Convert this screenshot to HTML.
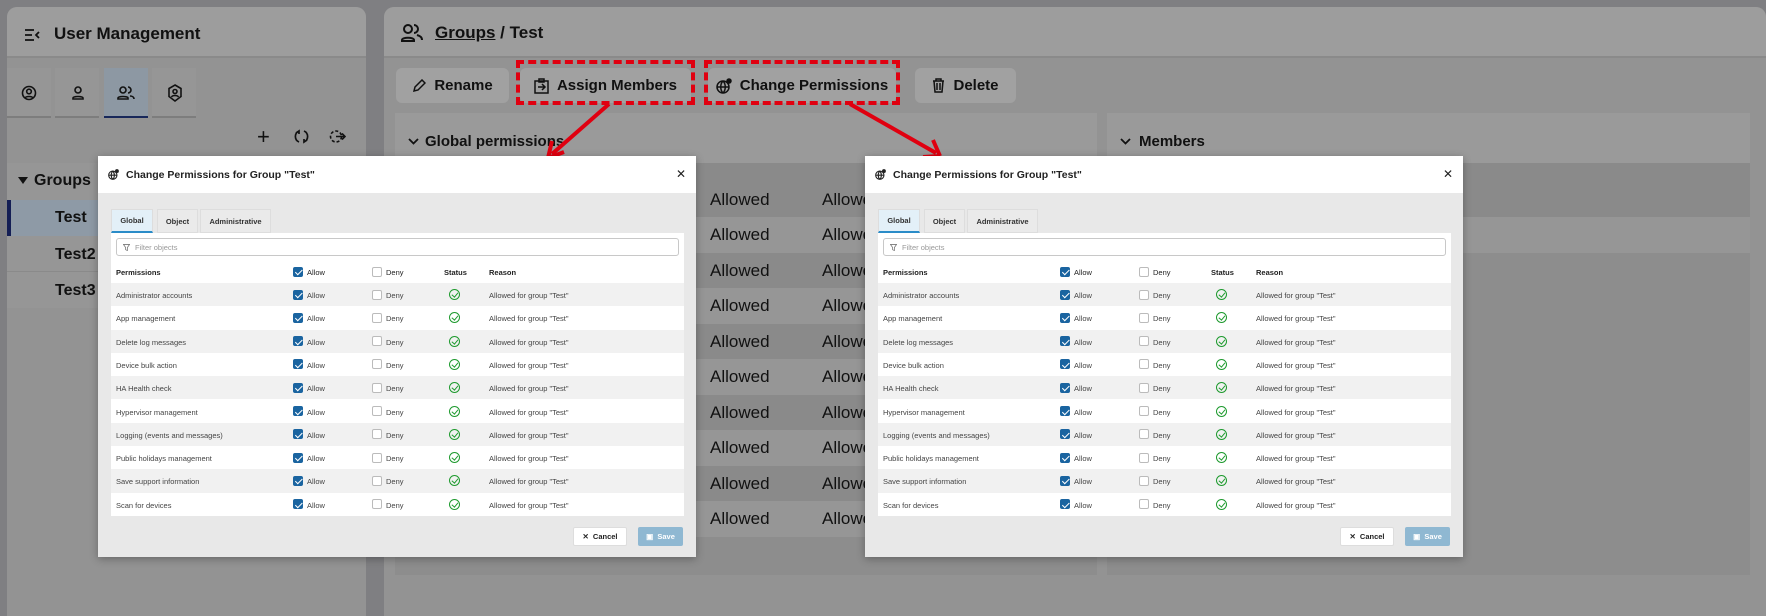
<!DOCTYPE html>
<html><head><meta charset="utf-8"><style>
*{box-sizing:border-box;margin:0;padding:0}
body{width:1766px;height:616px;overflow:hidden;background:#7f7f82;font-family:"Liberation Sans",Arial,sans-serif;position:relative;color:#111}
.abs{position:absolute}
.panel{position:absolute;background:#939393;border-radius:10px 10px 0 0;overflow:hidden}
.hdr{position:absolute;left:0;right:0;top:0;height:51px;background:#9d9d9d;border-bottom:2px solid #8a8a8a}
.tab{position:absolute;top:61px;height:50px;background:#969696;border-bottom:2px solid #7d7d7d}
.btn{position:absolute;top:61px;height:41px;background:#a1a1a1;border-radius:6px;font-weight:bold;font-size:15px;display:flex;align-items:center;justify-content:center;gap:8px}
.dash{position:absolute;border:4px dashed #e00010}
.sec{position:absolute;top:113px;background:#939393;border-radius:6px 6px 0 0}
.band{position:absolute;left:0;right:0;height:35.5px}
.al{position:absolute;font-size:17px;color:#111}
.dlg{position:absolute;top:156px;width:598px;height:401px;background:#e8e8e8;box-shadow:0 2px 8px rgba(0,0,0,.3)}
.dh{position:absolute;left:0;top:0;width:100%;height:37px;background:#fff;font-size:10.5px;font-weight:bold;color:#222}
.tb{position:absolute;top:53px;height:24px;background:#eaeaea;border:1px solid #ddd;font-size:7.5px;font-weight:bold;color:#333;display:flex;align-items:center;justify-content:center}
.tp{position:absolute;left:13px;top:77px;width:573px;height:283px;background:#fff}
.flt{position:absolute;left:5px;top:5px;width:563px;height:18px;border:1px solid #c8c8c8;border-radius:3px;font-size:7.5px;color:#999;padding:4px 0 0 18px}
.row{position:absolute;left:0;width:573px;height:23.3px;font-size:7.5px;color:#444}
.row.g{background:#f1f1f1}
.row span{position:absolute;top:8px}
.cb{position:absolute;top:6.5px;width:10px;height:10px;border:1px solid #bbb;border-radius:2px;background:#fff}
.cb.on{background:#1a64a0;border-color:#1a64a0}
.cb.on:after{content:"";position:absolute;left:2.5px;top:.5px;width:3px;height:5.5px;border:solid #fff;border-width:0 1.5px 1.5px 0;transform:rotate(45deg)}
.ok{position:absolute;left:338px;top:6px;width:11px;height:11px;border:1.3px solid #1e9a2e;border-radius:50%}
.ok:after{content:"";position:absolute;left:3px;top:1px;width:2.5px;height:5px;border:solid #1e9a2e;border-width:0 1.3px 1.3px 0;transform:rotate(40deg)}
.hr{font-weight:bold;color:#222}
.fb{position:absolute;top:371px;height:19px;font-size:7.5px;font-weight:bold;display:flex;align-items:center;justify-content:center;border-radius:2px}
</style></head><body>

<div class="panel" style="left:7px;top:7px;width:359px;height:609px">
 <div class="hdr"></div>
 <svg class="abs" style="left:17px;top:21px" width="16" height="14" viewBox="0 0 16 14"><path d="M1 2h9M1 7h7M1 12h9M15 4l-3 3 3 3" stroke="#111" stroke-width="1.8" fill="none"/></svg>
 <div class="abs" style="left:47px;top:17px;font-size:17px;font-weight:bold">User Management</div>
 <div class="tab" style="left:0;width:44px"></div>
 <div class="tab" style="left:48px;width:44px"></div>
 <div class="tab" style="left:97px;width:44px;background:#8d98a3;border-bottom-color:#17275a"></div>
 <div class="tab" style="left:145px;width:44px"></div>
 <svg class="abs" style="left:14px;top:78px" width="16" height="16" viewBox="0 0 16 16" fill="none" stroke="#111" stroke-width="1.6"><circle cx="8" cy="8" r="6.5"/><circle cx="8" cy="6.5" r="2.3"/><path d="M4 13c1-2 7-2 8 0"/></svg>
 <svg class="abs" style="left:63px;top:78px" width="16" height="16" viewBox="0 0 16 16" fill="none" stroke="#111" stroke-width="1.6"><circle cx="8" cy="5" r="3"/><path d="M3 14v-1c0-2 10-2 10 0v1z"/></svg>
 <svg class="abs" style="left:110px;top:78px" width="18" height="16" viewBox="0 0 18 16" fill="none" stroke="#111" stroke-width="1.6"><circle cx="6" cy="5" r="3"/><path d="M1 14v-1c0-2 10-2 10 0v1zM11 2a3 3 0 0 1 0 6M13 11c2 0 4 1 4 3"/></svg>
 <svg class="abs" style="left:160px;top:77px" width="16" height="18" viewBox="0 0 16 18" fill="none" stroke="#111" stroke-width="1.6"><path d="M8 1l6 3.5v8L8 17l-6-4.5v-8z"/><circle cx="8" cy="7.5" r="2"/><path d="M4.5 13c1-2 6-2 7 0"/></svg>
 <div class="abs" style="left:250px;top:119px;font-size:22px;line-height:22px">+</div>
 <svg class="abs" style="left:287px;top:122px" width="15" height="15" viewBox="0 0 15 15" fill="none" stroke="#111" stroke-width="1.7"><path d="M5 2a6 6 0 0 0 0 11M10 2a6 6 0 0 1 0 11M2 4l3-2 0 3M13 11l-3 2 0-3"/></svg>
 <svg class="abs" style="left:322px;top:121px" width="17" height="17" viewBox="0 0 17 17" fill="none" stroke="#111" stroke-width="1.6"><circle cx="7" cy="8.5" r="5.5" stroke-dasharray="3 2"/><path d="M7 8.5h9M13 5.5l3 3-3 3"/></svg>
 <div class="abs" style="left:0;top:156px;width:359px;height:37px;background:#969696"></div>
 <div class="abs" style="left:11px;top:170px;border-left:5px solid transparent;border-right:5px solid transparent;border-top:7px solid #111"></div>
 <div class="abs" style="left:27px;top:165px;font-size:16px;font-weight:bold">Groups</div>
 <div class="abs" style="left:0;top:193px;width:359px;height:36px;background:#8e9aa6;border-left:4px solid #141e55"></div>
 <div class="abs" style="left:48px;top:202px;font-size:16px;font-weight:bold">Test</div>
 <div class="abs" style="left:0;top:229px;width:359px;height:36px;background:#969696;border-bottom:1px solid #8a8a8a"></div>
 <div class="abs" style="left:48px;top:239px;font-size:16px;font-weight:bold">Test2</div>
 <div class="abs" style="left:0;top:265px;width:359px;height:36px;background:#969696"></div>
 <div class="abs" style="left:48px;top:275px;font-size:16px;font-weight:bold">Test3</div>
</div>

<div class="panel" style="left:384px;top:7px;width:1382px;height:609px">
 <div class="hdr"></div>
 <svg class="abs" style="left:17px;top:16px" width="22" height="20" viewBox="0 0 22 20" fill="none" stroke="#111" stroke-width="2"><circle cx="7" cy="6" r="4"/><path d="M1 18v-1c0-3 12-3 12 0v1zM13 2a4 4 0 0 1 0 8M16 12c3 1 5 2 5 5"/></svg>
 <div class="abs" style="left:51px;top:16px;font-size:17px;font-weight:bold"><u>Groups</u> / Test</div>
</div>
<div class="btn" style="left:396px;top:68px;width:113px;height:35px">
 <svg width="14" height="14" viewBox="0 0 14 14"><path d="M2 12l1-4 7-7 3 3-7 7z" fill="none" stroke="#111" stroke-width="1.5"/></svg>Rename</div>
<div class="btn" style="left:520px;top:68px;width:171px;height:35px">
 <svg width="15" height="16" viewBox="0 0 15 16" fill="none" stroke="#111" stroke-width="1.5"><rect x="1" y="3" width="13" height="12"/><path d="M5 1h5v3H5zM4 9h7M8 6l3 3-3 3"/></svg>Assign Members</div>
<div class="btn" style="left:708px;top:68px;width:188px;height:35px">
 <svg width="16" height="16" viewBox="0 0 16 16" fill="none" stroke="#111" stroke-width="1.5"><circle cx="7" cy="9" r="6"/><path d="M1 9h12M7 3c-3 3-3 9 0 12M7 3c3 3 3 9 0 12"/><circle cx="13" cy="3" r="2" fill="#111"/></svg>Change Permissions</div>
<div class="btn" style="left:915px;top:68px;width:101px;height:35px">
 <svg width="13" height="15" viewBox="0 0 13 15" fill="none" stroke="#111" stroke-width="1.5"><path d="M1 3h11M4 3V1h5v2M2 3l1 11h7l1-11M5 5v7M8 5v7"/></svg>Delete</div>
<div class="dash" style="left:516px;top:60px;width:179px;height:45px"></div>
<div class="dash" style="left:704px;top:60px;width:196px;height:45px"></div>

<div class="sec" style="left:395px;width:702px;height:462px;background:#8d8d8d">
 <div class="abs" style="left:0;top:0;width:702px;height:50px;background:#9a9a9a"></div>
 <svg class="abs" style="left:13px;top:25px" width="11" height="7" viewBox="0 0 11 7"><path d="M1 1l4.5 4.5L10 1" stroke="#111" stroke-width="1.8" fill="none"/></svg>
 <div class="abs" style="left:30px;top:20px;font-size:15px;font-weight:bold">Global permissions</div>
 <div class="band" style="top:50px;height:54px;background:#8a8a8a"></div>
 <div class="band" style="top:104px;background:#969696"></div>
 <div class="band" style="top:139.5px;background:#8a8a8a"></div>
 <div class="band" style="top:175px;background:#969696"></div>
 <div class="band" style="top:210.5px;background:#8a8a8a"></div>
 <div class="band" style="top:246px;background:#969696"></div>
 <div class="band" style="top:281.5px;background:#8a8a8a"></div>
 <div class="band" style="top:317px;background:#969696"></div>
 <div class="band" style="top:352.5px;background:#8a8a8a"></div>
 <div class="band" style="top:388px;background:#969696"></div>
 <div class="al" style="left:315px;top:77px">Allowed</div><div class="al" style="left:427px;top:77px">Allowed</div>
 <div class="al" style="left:315px;top:112px">Allowed</div><div class="al" style="left:427px;top:112px">Allowed</div>
 <div class="al" style="left:315px;top:148px">Allowed</div><div class="al" style="left:427px;top:148px">Allowed</div>
 <div class="al" style="left:315px;top:183px">Allowed</div><div class="al" style="left:427px;top:183px">Allowed</div>
 <div class="al" style="left:315px;top:219px">Allowed</div><div class="al" style="left:427px;top:219px">Allowed</div>
 <div class="al" style="left:315px;top:254px">Allowed</div><div class="al" style="left:427px;top:254px">Allowed</div>
 <div class="al" style="left:315px;top:290px">Allowed</div><div class="al" style="left:427px;top:290px">Allowed</div>
 <div class="al" style="left:315px;top:325px">Allowed</div><div class="al" style="left:427px;top:325px">Allowed</div>
 <div class="al" style="left:315px;top:361px">Allowed</div><div class="al" style="left:427px;top:361px">Allowed</div>
 <div class="al" style="left:315px;top:396px">Allowed</div><div class="al" style="left:427px;top:396px">Allowed</div>
</div>
<div class="sec" style="left:1107px;width:643px;height:462px;background:#8d8d8d">
 <div class="abs" style="left:0;top:0;width:643px;height:50px;background:#9a9a9a"></div>
 <svg class="abs" style="left:13px;top:25px" width="11" height="7" viewBox="0 0 11 7"><path d="M1 1l4.5 4.5L10 1" stroke="#111" stroke-width="1.8" fill="none"/></svg>
 <div class="abs" style="left:32px;top:20px;font-size:15px;font-weight:bold">Members</div>
 <div class="band" style="top:50px;height:54px;background:#8a8a8a"></div>
 <div class="band" style="top:104px;background:#969696"></div>
</div>

<svg class="abs" style="left:0;top:0" width="1766" height="616">
 <path d="M609 104L552 154" stroke="#e00010" stroke-width="4"/>
 <path d="M548 158l4-17M548 158l16-6" stroke="#e00010" stroke-width="4"/>
 <path d="M850 104L936 153" stroke="#e00010" stroke-width="4"/>
 <path d="M940 156l-7-16M940 156l-17 1" stroke="#e00010" stroke-width="4"/>
</svg>

<div class="dlg" style="left:98px">
 <div class="dh">
  <svg class="abs" style="left:10px;top:13px" width="11" height="11" viewBox="0 0 16 16" fill="none" stroke="#222" stroke-width="1.6"><circle cx="7" cy="9" r="6"/><path d="M1 9h12M7 3c-3 3-3 9 0 12M7 3c3 3 3 9 0 12"/><circle cx="13" cy="3" r="2" fill="#222"/></svg>
  <div class="abs" style="left:28px;top:13px">Change Permissions for Group "Test"</div>
  <div class="abs" style="left:578px;top:11px;font-size:12px;font-weight:normal">✕</div>
 </div>
 <div class="tb" style="left:13px;width:42px;background:#e3f0f8;border-bottom:2px solid #2a8cc8">Global</div>
 <div class="tb" style="left:59px;width:41px">Object</div>
 <div class="tb" style="left:102px;width:71px">Administrative</div>
 <div class="tp">
  <div class="flt"><svg class="abs" style="left:6px;top:5px" width="7" height="7" viewBox="0 0 8 8"><path d="M.5.5h7L5 4v3.5L3 6.5V4z" fill="none" stroke="#777" stroke-width=".9"/></svg>Filter objects</div>
  <div class="row hr" style="top:27px"><span style="left:5px">Permissions</span><i class="cb on" style="left:182px"></i><span style="left:196px;font-weight:normal">Allow</span><i class="cb" style="left:261px"></i><span style="left:275px;font-weight:normal">Deny</span><span style="left:333px">Status</span><span style="left:378px">Reason</span></div>
  <div class="row g" style="top:50px"><span style="left:5px">Administrator accounts</span><i class="cb on" style="left:182px"></i><span style="left:196px">Allow</span><i class="cb" style="left:261px"></i><span style="left:275px">Deny</span><i class="ok"></i><span style="left:378px">Allowed for group "Test"</span></div>
  <div class="row" style="top:73.3px"><span style="left:5px">App management</span><i class="cb on" style="left:182px"></i><span style="left:196px">Allow</span><i class="cb" style="left:261px"></i><span style="left:275px">Deny</span><i class="ok"></i><span style="left:378px">Allowed for group "Test"</span></div>
  <div class="row g" style="top:96.6px"><span style="left:5px">Delete log messages</span><i class="cb on" style="left:182px"></i><span style="left:196px">Allow</span><i class="cb" style="left:261px"></i><span style="left:275px">Deny</span><i class="ok"></i><span style="left:378px">Allowed for group "Test"</span></div>
  <div class="row" style="top:119.9px"><span style="left:5px">Device bulk action</span><i class="cb on" style="left:182px"></i><span style="left:196px">Allow</span><i class="cb" style="left:261px"></i><span style="left:275px">Deny</span><i class="ok"></i><span style="left:378px">Allowed for group "Test"</span></div>
  <div class="row g" style="top:143.2px"><span style="left:5px">HA Health check</span><i class="cb on" style="left:182px"></i><span style="left:196px">Allow</span><i class="cb" style="left:261px"></i><span style="left:275px">Deny</span><i class="ok"></i><span style="left:378px">Allowed for group "Test"</span></div>
  <div class="row" style="top:166.5px"><span style="left:5px">Hypervisor management</span><i class="cb on" style="left:182px"></i><span style="left:196px">Allow</span><i class="cb" style="left:261px"></i><span style="left:275px">Deny</span><i class="ok"></i><span style="left:378px">Allowed for group "Test"</span></div>
  <div class="row g" style="top:189.8px"><span style="left:5px">Logging (events and messages)</span><i class="cb on" style="left:182px"></i><span style="left:196px">Allow</span><i class="cb" style="left:261px"></i><span style="left:275px">Deny</span><i class="ok"></i><span style="left:378px">Allowed for group "Test"</span></div>
  <div class="row" style="top:213.1px"><span style="left:5px">Public holidays management</span><i class="cb on" style="left:182px"></i><span style="left:196px">Allow</span><i class="cb" style="left:261px"></i><span style="left:275px">Deny</span><i class="ok"></i><span style="left:378px">Allowed for group "Test"</span></div>
  <div class="row g" style="top:236.4px"><span style="left:5px">Save support information</span><i class="cb on" style="left:182px"></i><span style="left:196px">Allow</span><i class="cb" style="left:261px"></i><span style="left:275px">Deny</span><i class="ok"></i><span style="left:378px">Allowed for group "Test"</span></div>
  <div class="row" style="top:259.7px"><span style="left:5px">Scan for devices</span><i class="cb on" style="left:182px"></i><span style="left:196px">Allow</span><i class="cb" style="left:261px"></i><span style="left:275px">Deny</span><i class="ok"></i><span style="left:378px">Allowed for group "Test"</span></div>
 </div>
 <div class="fb" style="left:475px;width:54px;background:#fff;color:#222;border:1px solid #ddd">✕&nbsp; Cancel</div>
 <div class="fb" style="left:540px;width:45px;background:#8fb8d2;color:#fff">▣&nbsp; Save</div>
</div>

<div class="dlg" style="left:865px">
 <div class="dh">
  <svg class="abs" style="left:10px;top:13px" width="11" height="11" viewBox="0 0 16 16" fill="none" stroke="#222" stroke-width="1.6"><circle cx="7" cy="9" r="6"/><path d="M1 9h12M7 3c-3 3-3 9 0 12M7 3c3 3 3 9 0 12"/><circle cx="13" cy="3" r="2" fill="#222"/></svg>
  <div class="abs" style="left:28px;top:13px">Change Permissions for Group "Test"</div>
  <div class="abs" style="left:578px;top:11px;font-size:12px;font-weight:normal">✕</div>
 </div>
 <div class="tb" style="left:13px;width:42px;background:#e3f0f8;border-bottom:2px solid #2a8cc8">Global</div>
 <div class="tb" style="left:59px;width:41px">Object</div>
 <div class="tb" style="left:102px;width:71px">Administrative</div>
 <div class="tp">
  <div class="flt"><svg class="abs" style="left:6px;top:5px" width="7" height="7" viewBox="0 0 8 8"><path d="M.5.5h7L5 4v3.5L3 6.5V4z" fill="none" stroke="#777" stroke-width=".9"/></svg>Filter objects</div>
  <div class="row hr" style="top:27px"><span style="left:5px">Permissions</span><i class="cb on" style="left:182px"></i><span style="left:196px;font-weight:normal">Allow</span><i class="cb" style="left:261px"></i><span style="left:275px;font-weight:normal">Deny</span><span style="left:333px">Status</span><span style="left:378px">Reason</span></div>
  <div class="row g" style="top:50px"><span style="left:5px">Administrator accounts</span><i class="cb on" style="left:182px"></i><span style="left:196px">Allow</span><i class="cb" style="left:261px"></i><span style="left:275px">Deny</span><i class="ok"></i><span style="left:378px">Allowed for group "Test"</span></div>
  <div class="row" style="top:73.3px"><span style="left:5px">App management</span><i class="cb on" style="left:182px"></i><span style="left:196px">Allow</span><i class="cb" style="left:261px"></i><span style="left:275px">Deny</span><i class="ok"></i><span style="left:378px">Allowed for group "Test"</span></div>
  <div class="row g" style="top:96.6px"><span style="left:5px">Delete log messages</span><i class="cb on" style="left:182px"></i><span style="left:196px">Allow</span><i class="cb" style="left:261px"></i><span style="left:275px">Deny</span><i class="ok"></i><span style="left:378px">Allowed for group "Test"</span></div>
  <div class="row" style="top:119.9px"><span style="left:5px">Device bulk action</span><i class="cb on" style="left:182px"></i><span style="left:196px">Allow</span><i class="cb" style="left:261px"></i><span style="left:275px">Deny</span><i class="ok"></i><span style="left:378px">Allowed for group "Test"</span></div>
  <div class="row g" style="top:143.2px"><span style="left:5px">HA Health check</span><i class="cb on" style="left:182px"></i><span style="left:196px">Allow</span><i class="cb" style="left:261px"></i><span style="left:275px">Deny</span><i class="ok"></i><span style="left:378px">Allowed for group "Test"</span></div>
  <div class="row" style="top:166.5px"><span style="left:5px">Hypervisor management</span><i class="cb on" style="left:182px"></i><span style="left:196px">Allow</span><i class="cb" style="left:261px"></i><span style="left:275px">Deny</span><i class="ok"></i><span style="left:378px">Allowed for group "Test"</span></div>
  <div class="row g" style="top:189.8px"><span style="left:5px">Logging (events and messages)</span><i class="cb on" style="left:182px"></i><span style="left:196px">Allow</span><i class="cb" style="left:261px"></i><span style="left:275px">Deny</span><i class="ok"></i><span style="left:378px">Allowed for group "Test"</span></div>
  <div class="row" style="top:213.1px"><span style="left:5px">Public holidays management</span><i class="cb on" style="left:182px"></i><span style="left:196px">Allow</span><i class="cb" style="left:261px"></i><span style="left:275px">Deny</span><i class="ok"></i><span style="left:378px">Allowed for group "Test"</span></div>
  <div class="row g" style="top:236.4px"><span style="left:5px">Save support information</span><i class="cb on" style="left:182px"></i><span style="left:196px">Allow</span><i class="cb" style="left:261px"></i><span style="left:275px">Deny</span><i class="ok"></i><span style="left:378px">Allowed for group "Test"</span></div>
  <div class="row" style="top:259.7px"><span style="left:5px">Scan for devices</span><i class="cb on" style="left:182px"></i><span style="left:196px">Allow</span><i class="cb" style="left:261px"></i><span style="left:275px">Deny</span><i class="ok"></i><span style="left:378px">Allowed for group "Test"</span></div>
 </div>
 <div class="fb" style="left:475px;width:54px;background:#fff;color:#222;border:1px solid #ddd">✕&nbsp; Cancel</div>
 <div class="fb" style="left:540px;width:45px;background:#8fb8d2;color:#fff">▣&nbsp; Save</div>
</div>
</body></html>
